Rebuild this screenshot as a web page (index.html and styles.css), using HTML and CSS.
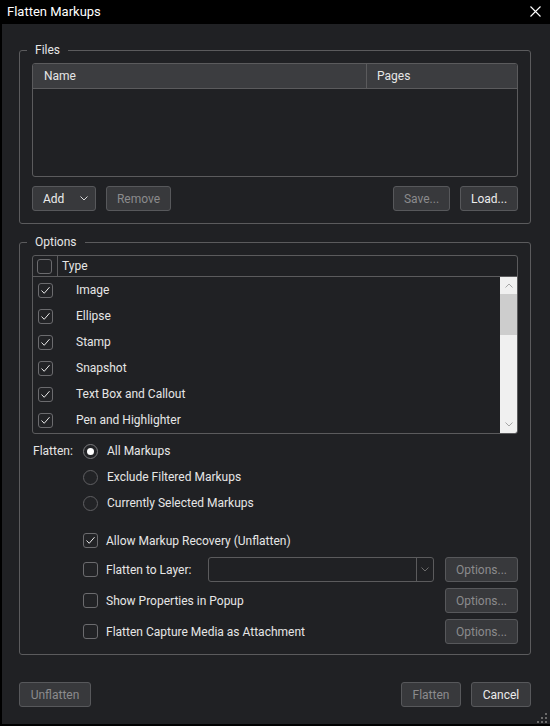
FILE: index.html
```html
<!DOCTYPE html>
<html lang="en">
<head>
<meta charset="utf-8">
<title>Flatten Markups</title>
<link rel="stylesheet" href="styles.css">
</head>
<body>
<div class="window">
  <header class="titlebar">
    <span class="title">Flatten Markups</span>
    <svg class="close" width="11" height="11" viewBox="0 0 11 11"><path d="M0.5 0.5 L10.5 10.5 M10.5 0.5 L0.5 10.5" stroke="#ffffff" stroke-width="1.1" fill="none"/></svg>
  </header>

  <main class="dialog">
    <fieldset class="group files">
      <legend>Files</legend>
      <div class="grid files-grid">
        <div class="grid-head">
          <div class="col col-name">Name</div>
          <div class="col col-pages">Pages</div>
        </div>
        <div class="grid-body"></div>
      </div>
      <div class="button-row">
        <button class="btn btn-add">Add
          <svg class="chev" width="8" height="5" viewBox="0 0 8 5"><path d="M0.5 0.5 L4 4 L7.5 0.5" stroke="#d8d8d8" fill="none"/></svg>
        </button>
        <button class="btn btn-remove" disabled>Remove</button>
        <span class="spacer"></span>
        <button class="btn btn-save" disabled>Save...</button>
        <button class="btn btn-load">Load...</button>
      </div>
    </fieldset>

    <fieldset class="group options">
      <legend>Options</legend>
      <div class="grid types-grid">
        <div class="types-head">
          <span class="box head-box"></span>
          <span class="types-title">Type</span>
        </div>
        <div class="types-body">
          <ul class="type-list">
            <li><span class="box on"><svg viewBox="0 0 13 13"><path d="M2.5 6.5 L5.2 9.3 L10.5 3.2" stroke="#e8e8e8" fill="none"/></svg></span><span class="type-name">Image</span></li>
            <li><span class="box on"><svg viewBox="0 0 13 13"><path d="M2.5 6.5 L5.2 9.3 L10.5 3.2" stroke="#e8e8e8" fill="none"/></svg></span><span class="type-name">Ellipse</span></li>
            <li><span class="box on"><svg viewBox="0 0 13 13"><path d="M2.5 6.5 L5.2 9.3 L10.5 3.2" stroke="#e8e8e8" fill="none"/></svg></span><span class="type-name">Stamp</span></li>
            <li><span class="box on"><svg viewBox="0 0 13 13"><path d="M2.5 6.5 L5.2 9.3 L10.5 3.2" stroke="#e8e8e8" fill="none"/></svg></span><span class="type-name">Snapshot</span></li>
            <li><span class="box on"><svg viewBox="0 0 13 13"><path d="M2.5 6.5 L5.2 9.3 L10.5 3.2" stroke="#e8e8e8" fill="none"/></svg></span><span class="type-name">Text Box and Callout</span></li>
            <li><span class="box on"><svg viewBox="0 0 13 13"><path d="M2.5 6.5 L5.2 9.3 L10.5 3.2" stroke="#e8e8e8" fill="none"/></svg></span><span class="type-name">Pen and Highlighter</span></li>
          </ul>
          <div class="scrollbar">
            <div class="sb-arrow"><svg width="8" height="5" viewBox="0 0 8 5"><path d="M0.5 4.5 L4 1 L7.5 4.5" stroke="#a6a6a6" fill="none"/></svg></div>
            <div class="sb-track"><div class="sb-thumb"></div></div>
            <div class="sb-arrow"><svg width="8" height="5" viewBox="0 0 8 5"><path d="M0.5 0.5 L4 4 L7.5 0.5" stroke="#a6a6a6" fill="none"/></svg></div>
          </div>
        </div>
      </div>

      <div class="flatten-mode">
        <span class="mode-label">Flatten:</span>
        <div class="radios">
          <label class="radio-row"><span class="radio on"></span>All Markups</label>
          <label class="radio-row"><span class="radio"></span>Exclude Filtered Markups</label>
          <label class="radio-row"><span class="radio"></span>Currently Selected Markups</label>
        </div>
      </div>

      <div class="extras">
        <div class="extra-row row-allow">
          <span class="box on"><svg viewBox="0 0 13 13"><path d="M2.5 6.5 L5.2 9.3 L10.5 3.2" stroke="#e8e8e8" fill="none"/></svg></span>
          <span class="extra-label">Allow Markup Recovery (Unflatten)</span>
        </div>
        <div class="extra-row">
          <span class="box"></span>
          <span class="extra-label">Flatten to Layer:</span>
          <div class="combo">
            <span class="combo-value"></span>
            <span class="combo-drop"><svg width="8" height="5" viewBox="0 0 8 5"><path d="M0.5 0.5 L4 4 L7.5 0.5" stroke="#6c6c6c" fill="none"/></svg></span>
          </div>
          <button class="btn btn-opt" disabled>Options...</button>
        </div>
        <div class="extra-row">
          <span class="box"></span>
          <span class="extra-label">Show Properties in Popup</span>
          <button class="btn btn-opt" disabled>Options...</button>
        </div>
        <div class="extra-row">
          <span class="box"></span>
          <span class="extra-label">Flatten Capture Media as Attachment</span>
          <button class="btn btn-opt" disabled>Options...</button>
        </div>
      </div>
    </fieldset>

    <footer class="footer">
      <button class="btn btn-unflatten" disabled>Unflatten</button>
      <span class="spacer"></span>
      <button class="btn btn-flatten" disabled>Flatten</button>
      <button class="btn btn-cancel">Cancel</button>
    </footer>

    <span class="grip">
      <svg width="10" height="10" viewBox="0 0 10 10" fill="#6a6a6a">
        <rect x="8" y="0" width="2" height="2"/>
        <rect x="4" y="4" width="2" height="2"/><rect x="8" y="4" width="2" height="2"/>
        <rect x="0" y="8" width="2" height="2"/><rect x="4" y="8" width="2" height="2"/><rect x="8" y="8" width="2" height="2"/>
      </svg>
    </span>
  </main>
</div>
</body>
</html>
```

FILE: styles.css
```css
* { box-sizing: border-box; }

html, body {
  margin: 0;
  padding: 0;
  background: #000000;
}

body {
  font-family: Roboto, "Noto Sans", "Liberation Sans", sans-serif;
  font-size: 12px;
  color: #e6e6e6;
}

.window {
  width: 550px;
  height: 726px;
  display: flex;
  flex-direction: column;
  background: #000000;
}

/* title bar */
.titlebar {
  height: 24px;
  flex: none;
  display: flex;
  align-items: center;
  padding: 0 9px 0 7px;
}
.title {
  font-size: 13px;
  color: #ffffff;
  flex: 1;
  line-height: 24px;
}
.close { display: block; margin-top: -1px; }

/* dialog body */
.dialog {
  position: relative;
  flex: 1;
  margin: 0 0 2px 2px;
  background: #202124;
  padding: 19px 19px 17px 17px;
  display: flex;
  flex-direction: column;
}

/* group boxes */
.group {
  margin: 0;
  padding: 6px 12px 12px;
  border: 1px solid #5b5b5d;
  border-radius: 3px;
  min-width: 0;
}
.group legend {
  margin-left: -5px;
  padding: 0 8px;
  line-height: 14px;
  font-size: 12px;
  color: #e6e6e6;
}
.options {
  margin-top: 11px;
  padding-bottom: 10px;
}

/* list grids */
.grid {
  border: 1px solid #5b5b5d;
  border-radius: 3px;
  overflow: hidden;
}
.grid-head {
  display: flex;
  height: 25px;
  background: #3c3d40;
  border-bottom: 1px solid #5b5b5d;
}
.col {
  display: flex;
  align-items: center;
}
.col-name {
  width: 334px;
  padding-left: 11px;
  border-right: 1px solid #5b5b5d;
}
.col-pages {
  flex: 1;
  padding-left: 10px;
}
.grid-body {
  height: 87px;
}

/* buttons */
.btn {
  height: 25px;
  border: 1px solid #57585b;
  border-radius: 3px;
  background: #38393c;
  color: #ececec;
  font-family: inherit;
  font-size: 12px;
  padding: 0;
  display: inline-flex;
  align-items: center;
  justify-content: center;
}
.btn:disabled { color: #8b8b8d; }

.button-row {
  display: flex;
  margin-top: 9px;
  gap: 10px;
}
.spacer { flex: 1; }
.btn-add {
  width: 64px;
  justify-content: space-between;
  padding: 0 7px 0 10px;
}
.btn-add .chev { display: block; }
.btn-remove { width: 65px; }
.btn-save { width: 57px; }
.btn-load { width: 58px; }

/* check boxes and radios */
.box {
  width: 15px;
  height: 15px;
  flex: none;
  border: 1px solid #6b6b6e;
  border-radius: 3px;
  background: #222326;
  display: inline-flex;
  align-items: center;
  justify-content: center;
}
.box svg { width: 13px; height: 13px; display: block; }

.radio {
  width: 15px;
  height: 15px;
  flex: none;
  border: 1px solid #5f5f62;
  border-radius: 50%;
  background: #222326;
  display: inline-flex;
  align-items: center;
  justify-content: center;
}
.radio.on { border-color: #7a7a7d; }
.radio.on::after {
  content: "";
  width: 7px;
  height: 7px;
  border-radius: 50%;
  background: #ffffff;
}

/* type list */
.types-head {
  display: flex;
  align-items: center;
  height: 21px;
  border-bottom: 1px solid #5b5b5d;
}
.head-box {
  margin-left: 4px;
  margin-top: 1px;
}
.types-title {
  height: 100%;
  display: flex;
  align-items: center;
  margin-left: 5px;
  padding-left: 4px;
  border-left: 1px solid #5b5b5d;
}
.types-body {
  display: flex;
  height: 156px;
}
.type-list {
  list-style: none;
  margin: 0;
  padding: 0;
  flex: 1;
}
.type-list li {
  height: 26px;
  display: flex;
  align-items: center;
  padding-left: 5px;
}
.type-name { margin-left: 23px; }

.scrollbar {
  width: 17px;
  background: #f0f0f0;
  display: flex;
  flex-direction: column;
}
.sb-arrow {
  height: 17px;
  display: flex;
  align-items: center;
  justify-content: center;
}
.sb-arrow svg { display: block; }
.sb-track { flex: 1; }
.sb-thumb {
  height: 41px;
  background: #cdcdcd;
}

/* flatten mode */
.flatten-mode {
  display: flex;
  margin-top: 4px;
}
.mode-label {
  width: 51px;
  height: 26px;
  line-height: 26px;
  padding-left: 1px;
}
.radios {
  display: flex;
  flex-direction: column;
}
.radio-row {
  height: 26px;
  display: flex;
  align-items: center;
  gap: 9px;
}

/* extra options */
.extras {
  margin-top: 13px;
  margin-left: 51px;
  display: flex;
  flex-direction: column;
  gap: 6px;
}
.extra-row {
  height: 25px;
  display: flex;
  align-items: center;
}
.row-allow {
  height: 23px;
  margin-bottom: -1px;
}
.extra-label {
  margin-left: 8px;
  flex: 1;
}
.combo {
  width: 226px;
  height: 25px;
  border: 1px solid #5b5b5d;
  border-radius: 3px;
  display: flex;
}
.combo-value { flex: 1; }
.combo-drop {
  width: 17px;
  border-left: 1px solid #5b5b5d;
  display: flex;
  align-items: center;
  justify-content: center;
}
.combo-drop svg { display: block; }
.btn-opt {
  width: 73px;
  margin-left: 11px;
}

/* footer */
.footer {
  display: flex;
  margin-top: 27px;
  gap: 10px;
}
.btn-unflatten { width: 72px; }
.btn-flatten { width: 60px; }
.btn-cancel { width: 60px; }

.grip {
  position: absolute;
  right: 3px;
  bottom: 1px;
  line-height: 0;
}
```
